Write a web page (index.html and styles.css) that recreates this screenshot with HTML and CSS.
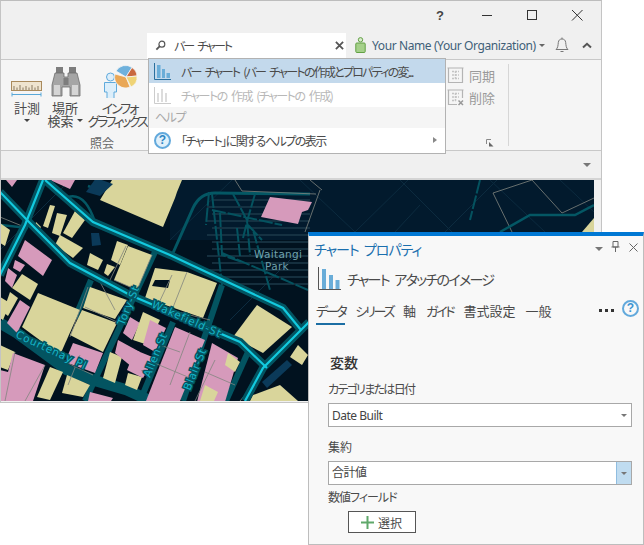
FILE: index.html
```html
<!DOCTYPE html>
<html lang="ja">
<head>
<meta charset="utf-8">
<title>チャート プロパティ</title>
<link rel="stylesheet" href="styles.css">
</head>
<body>
<div class="window">
  <div class="titlebar">
    <span class="help-mark">?</span>
    <svg class="win-icon" viewBox="0 0 12 12"><path class="win-line" d="M1 6.500H11"/></svg>
    <svg class="win-icon" viewBox="0 0 12 12"><rect class="win-line" x="1.500" y="1.500" width="9" height="9"/></svg>
    <svg class="win-icon" viewBox="0 0 12 12"><path class="win-line" d="M1 1L11.500 11.500M11.500 1L1 11.500"/></svg>
  </div>
  <div class="quickbar">
    <div class="search">
      <svg class="search-icon" viewBox="0 0 12 12"><circle class="lens" cx="7.500" cy="4.500" r="3.200"/><path class="lens-h" d="M5 7L1.500 10.500"/></svg>
      <span class="search-text">バー チャート</span>
      <svg class="search-x" viewBox="0 0 10 10"><path class="x-line" d="M1 1L9 9M9 1L1 9"/></svg>
    </div>
    <svg class="user-icon" viewBox="0 0 11 16"><circle class="user-line" cx="5.500" cy="2.800" r="2.200"/><rect class="user-body" x="0.800" y="6" width="9.400" height="9.500" rx="1"/></svg>
    <span class="user-name">Your Name (Your Organization)</span>
    <i class="caret caret-user"></i>
    <svg class="bell" viewBox="0 0 14 16"><path class="bell-line" d="M1 12.500C3 11 3 8 3.300 5.500C3.600 3 5 2 7 2C9 2 10.400 3 10.700 5.500C11 8 11 11 13 12.500ZM7 0.500V2M5.500 14.500H8.500"/></svg>
    <svg class="chev" viewBox="0 0 10 7"><path class="chev-line" d="M1 5.500L5 1.800L9 5.500"/></svg>
  </div>
  <div class="ribbon">
    <div class="group group-query">
      <div class="tools">
        <div class="tool tool-measure">
          <svg class="tool-icon" viewBox="0 0 38 38">
            <rect class="ruler" x="3.500" y="21.500" width="30" height="9"/>
            <path class="ruler-tick" d="M6 30V26M9 30V27.500M12 30V25M15 30V27.500M18 30V26M21 30V27.500M24 30V25M27 30V27.500M30 30V26"/>
            <path class="ruler-dim" d="M4 34.500H33M4 32.500V36.500M33 32.500V36.500"/>
          </svg>
          <span class="tool-label">計測</span>
          <i class="caret caret-center"></i>
        </div>
        <div class="tool tool-find">
          <svg class="tool-icon" viewBox="0 0 38 38">
            <path class="bino-dark" d="M10 7H17V14H10ZM23 7H30V14H23Z"/>
            <path class="bino-body" d="M9 13H18V17H22V13H31L34 25V36H24V27H16V36H6V25Z"/>
            <path class="bino-light" d="M8 25H14V35H8ZM26 25H32V35H26Z"/>
            <rect class="bino-dark" x="17.500" y="18" width="5" height="7"/>
          </svg>
          <span class="tool-label">場所</span>
          <span class="tool-label">検索<i class="caret caret-inline"></i></span>
        </div>
        <div class="tool tool-info">
          <svg class="tool-icon" viewBox="0 0 62 38">
            <circle class="person" cx="24.500" cy="17" r="4"/>
            <path class="person" d="M18.500 22.500H30.500V32H28V38.500H21V32H18.500Z"/>
            <path class="pie-orange" d="M40 17L29 14A11 11 0 0 0 44 27Z"/>
            <path class="pie-blue" d="M40 17L30 11A11 11 0 0 1 46 7.500Z"/>
            <path class="pie-red" d="M40 17L46 7.500A11 11 0 0 1 51 16Z"/>
            <path class="pie-yellow" d="M40 17L51 16A11 11 0 0 1 45 27Z"/>
          </svg>
          <span class="tool-label tool-kana tool-kana-short">インフォ</span>
          <span class="tool-label tool-kana">グラフィックス</span>
        </div>
      </div>
      <div class="group-name">照会</div>
    </div>
    <div class="group group-sync">
      <div class="sync-row">
        <svg class="sync-icon" viewBox="0 0 17 17"><path class="sync-line" d="M0.500 1H16.500M1.500 1V15.500H15.500V1"/><path class="sync-dash" d="M5 4.500H12M5 8H12M5 11.500H12M8.500 4V12"/></svg>
        <span class="sync-text">同期</span>
      </div>
      <div class="sync-row">
        <svg class="sync-icon" viewBox="0 0 17 17"><path class="sync-line" d="M0.500 1H16.500M1.500 1V15.500H10M15.500 1V9"/><path class="sync-dash" d="M5 4.500H12M5 8H12M5 11.500H9M8.500 4V12"/><path class="sync-x" d="M11.500 11.500L16 16M16 11.500L11.500 16"/></svg>
        <span class="sync-text">削除</span>
      </div>
      <svg class="launcher" viewBox="0 0 8 8"><path class="launch-line" d="M0.500 5V0.500H5"/><path class="launch-fill" d="M3 3L7.500 7.500H3Z"/></svg>
    </div>
    <div class="ribbon-sep"></div>
  </div>
  <div class="tabstrip"><i class="caret caret-strip"></i></div>
  <div class="map-frame">
    <svg class="map" viewBox="1 180 593 221">
      <rect class="m-bg" x="1" y="180" width="593" height="221"/>
      <rect class="m-park" x="170" y="180" width="424" height="60"/>
      <path class="m-faint" d="M300 180L355 232M355 232L408 180M400 180L460 240M445 232L497 180M395 232L420 205M490 180L545 232M560 180L594 212M0 250L70 180M170 240L232 180M230 320L300 250"/>
      <path class="m-park-line" d="M212 200H310M207 207H310M212 214H310M207 221H310M212 228H310M207 235H310M212 242H310M212 249H310M207 256H310M212 263H310M207 270H310M215 277H310M225 284H310"/>
      <path class="m-thin" d="M173 253L193 208Q200 193 215 193L310 194"/>
      <path class="m-dash" d="M209 192L206 225M212 194L222 285M233 194L247 220L250 255M255 194L248 218L243 238M212 210L282 225M220 213L222 255L242 262M237 228L240 256M253 230L270 290M222 253L308 290M248 225L262 240M480 180L470 220"/>
      <path class="m-outline" d="M235 180L242 191L316 194M493 193L532 180L562 213L594 198M493 193L512 232M305 232L320 190M310 180L322 190"/>

      <polyline class="r-wide" points="0,323 17,333 67,370 93,380 127,390 153,402"/>
      <polyline class="r-thin" points="155,252 85,401"/>
      <polyline class="r-thin" points="173,322 140,401"/>
      <polyline class="r-thin" points="222,285 183,401"/>
      <polyline class="r-thin" points="91,280 75,318"/>
      <polyline class="r-thin" points="248,352 226,401"/>
      <path class="r-small" d="M68 197Q85 192 95 222M88 186L98 190M0 225L28 228M500 232L530 215H575L594 205"/>

      <polygon class="b-y" points="100,200 112,180 182,180 177,192 175,198 163,227"/>
      <polygon class="b-y" points="50,205 55,206 48,228 43,226"/>
      <polygon class="b-y" points="57,213 67,215 60,236 52,233"/>
      <polygon class="b-y" points="75,211 85,220 72,238 63,233"/>
      <polygon class="b-y" points="60,235 83,248 73,258 55,245"/>
      <polygon class="b-y" points="36,222 41,227 39,230 35,226"/>
      <polygon class="b-y" points="117,241 128,245 120,265 111,260"/>
      <polygon class="b-y" points="128,246 152,255 137,290 114,280"/>
      <polygon class="b-y" points="90,253 103,260 98,270 87,265"/>
      <polygon class="b-y" points="107,264 115,267 108,276 104,273"/>
      <polygon class="b-y" points="0,223 10,230 5,246 0,243"/>
      <polygon class="b-y" points="22,274 38,284 30,300 12,288"/>
      <polygon class="b-y" points="0,297 10,303 3,320 0,318"/>
      <polygon class="b-y" points="10,292 18,298 8,316 3,312"/>
      <polygon class="b-p" points="25,240 52,260 43,276 18,256"/>
      <polygon class="b-p" points="15,260 25,265 20,272 13,268"/>
      <polygon class="b-p" points="8,268 17,275 12,288 5,281"/>
      <polygon class="b-p" points="20,300 30,307 17,333 7,323"/>
      <polygon class="b-p" points="6,180 17,180 12,187"/>
      <polygon class="b-p" points="50,180 75,180 70,189"/>
      <polygon class="b-y" points="38,293 80,310 60,355 22,327"/>
      <polygon class="b-y" points="82,310 117,323 103,352 70,335"/>
      <polygon class="b-y" points="90,287 127,300 115,319 83,308"/>
      <polygon class="b-y" points="155,268 187,272 217,283 203,318 145,298"/>
      <polygon class="m-dark" points="155,280 170,280 168,288 152,286"/>
      <polygon class="b-y" points="257,305 292,327 263,353 233,337"/>
      <polygon class="b-y" points="0,345 15,352 8,370 0,367"/>
      <polygon class="b-p" points="13,353 45,365 33,401 0,401 0,370 8,372"/>
      <polygon class="b-p" points="73,343 103,353 95,373 65,362"/>
      <polygon class="b-y" points="50,367 63,372 50,400 37,397"/>
      <polygon class="b-y" points="67,375 90,385 83,397 62,393"/>
      <polygon class="b-y" points="110,352 122,357 115,383 103,378"/>
      <polygon class="b-y" points="128,373 142,377 137,390 125,385"/>
      <polygon class="b-p" points="130,317 140,323 132,340 123,333"/>
      <polygon class="b-p" points="118,340 140,352 132,367 115,353"/>
      <polygon class="b-y" points="143,312 160,320 148,345 133,340"/>
      <polygon class="b-p" points="150,320 166,328 155,352 143,345"/>
      <polygon class="b-p" points="135,350 155,358 143,378 127,370"/>
      <polygon class="b-p" points="175,327 205,340 180,401 146,401"/>
      <polygon class="b-p" points="212,343 238,358 225,402 197,402"/>
      <polygon class="b-y" points="228,353 240,362 235,372 225,365"/>
      <polygon class="b-y" points="205,385 218,392 214,401 200,401"/>
      <polygon class="b-p" points="90,392 113,398 111,401 88,401"/>
      <polygon class="b-y" points="298,345 308,355 302,365 290,357"/>
      <polygon class="b-y" points="253,395 280,385 298,401 250,401"/>
      <polygon class="b-y" points="582,232 594,218 594,232"/>
      <polygon class="b-hatch" points="287,360 292,365 267,388 262,382"/>
      <polygon class="b-hatch" points="96,178 113,184 100,196 86,192"/>
      <polygon class="b-hatch" points="91,233 99,233 101,245 92,246"/>
      <polygon class="b-p" points="270,197 312,202 308,210 302,212 298,224 261,217"/>
      <path class="m-outline" d="M172,275 158,305M187,272 172,310M150,305 210,320M190,332 170,385M152,362 195,380M160,345 180,352M88,287 70,337M85,307 117,322M15,352 5,401M45,365 25,401M65,362 93,375M80,355 68,385M215,360 195,401M205,372 235,385M100,282 115,310M126,246 110,280M152,255 137,290 114,280"/>
      <path class="m-outline" d="M0 217L27 228L42 180M24 225L0 278M267 368L240 401M309 322L262 372"/>

      <polyline class="road" points="45,180 93,222 170,255 283,308 301,330"/>
      <polyline class="road" points="0,192 30,223 70,263 130,295 240,342 267,368"/>
      <polyline class="road" points="43,180 25,225 0,275"/>
      <polyline class="road" points="309,322 263,368 245,401"/>
      <polyline class="road-glow" points="45,180 93,222 170,255 283,308 301,330"/>
      <polyline class="road-glow" points="0,192 30,223 70,263 130,295 240,342 267,368"/>
      <polyline class="road-glow" points="43,180 25,225 0,275"/>
      <polyline class="road-glow" points="309,322 263,368 245,401"/>

      <text class="m-label" x="254" y="258">Waitangi</text>
      <text class="m-label" x="265" y="270">Park</text>
      <text class="m-street" transform="translate(151 307) rotate(24)">Wakefield-St</text>
      <text class="m-street" transform="translate(15 337) rotate(25)">Courtenay Pl</text>
      <text class="m-street" transform="translate(124 326) rotate(-68)">Tory-St</text>
      <text class="m-street" transform="translate(150 378) rotate(-68)">Allen-St</text>
      <text class="m-street" transform="translate(190 391) rotate(-68)">Blair-St</text>
    </svg>
  </div>
</div>

<div class="menu">
  <div class="menu-item menu-active">
    <svg class="menu-icon" viewBox="0 0 17 17"><path class="axis-blue" d="M0.500 0V16.500H17"/><path class="bar-blue" d="M3 2H6.500V15H3ZM8 6H11V15H8ZM12.500 10H16V15H12.500Z"/></svg>
    <span class="menu-text menu-text-long">バー チャート (バー チャートの作成とプロパティの変...</span>
  </div>
  <div class="menu-item menu-disabled">
    <svg class="menu-icon" viewBox="0 0 17 17"><path class="axis-grey" d="M0.500 0V16.500H17"/><path class="bar-grey" d="M3 6H5V15H3ZM7 2H9V15H7ZM11 6H13V15H11Z"/></svg>
    <span class="menu-text">チャートの 作成 (チャートの 作成)</span>
  </div>
  <div class="menu-head">ヘルプ</div>
  <div class="menu-item menu-help">
    <span class="q-icon">?</span>
    <span class="menu-text">「チャート」に関するヘルプの表示</span>
    <i class="arrow-right"></i>
  </div>
</div>

<aside class="panel">
  <div class="panel-head">
    <span class="panel-title">チャート プロパティ</span>
    <i class="caret caret-panel"></i>
    <svg class="pin" viewBox="0 0 9 11"><path class="pin-line" d="M2 0.500H7V6H2ZM0.500 6H8.500M4.500 6V11"/></svg>
    <svg class="panel-x" viewBox="0 0 9 9"><path class="panel-x-line" d="M0.500 0.500L8.500 8.500M8.500 0.500L0.500 8.500"/></svg>
  </div>
  <div class="panel-sub">
    <svg class="sub-icon" viewBox="0 0 23 23"><path class="axis-dark" d="M0.500 0V22.500H23"/><path class="bar-sub" d="M4 2H8V22H4ZM11 8H15V22H11ZM17.500 13H21.500V22H17.500Z"/></svg>
    <span class="sub-text">チャート アタッチのイメージ</span>
  </div>
  <div class="tabs">
    <span class="tab tab-kana tab-active">データ</span>
    <span class="tab tab-kana">シリーズ</span>
    <span class="tab">軸</span>
    <span class="tab tab-kana">ガイド</span>
    <span class="tab">書式設定</span>
    <span class="tab">一般</span>
    <span class="dots"><i></i><i></i><i></i></span>
    <span class="panel-help">?</span>
  </div>
  <div class="form">
    <h3 class="form-title">変数</h3>
    <div class="field-label field-first">カテゴリまたは日付</div>
    <div class="select">
      <span class="select-text">Date Built</span>
      <span class="select-btn"><i class="caret caret-small"></i></span>
    </div>
    <div class="field-label field-second">集約</div>
    <div class="select">
      <span class="select-text select-text-up">合計値</span>
      <span class="select-btn select-btn-hot"><i class="caret caret-small"></i></span>
    </div>
    <div class="field-label field-third">数値フィールド</div>
    <div class="pick">
      <svg class="plus" viewBox="0 0 13 13"><path class="plus-line" d="M6.500 0V13M0 6.500H13"/></svg>
      <span>選択</span>
    </div>
  </div>
</aside>
</body>
</html>
```

FILE: styles.css
```css
* { box-sizing: border-box; }
html, body { margin: 0; padding: 0; }
body {
  position: relative;
  width: 644px;
  height: 545px;
  overflow: hidden;
  background: #fff;
  color: #4a4a4a;
  font-family: "Noto Sans CJK JP", "Noto Sans", sans-serif;
  font-feature-settings: "palt";
  font-size: 12px;
}
i { display: block; font-style: normal; }

.window {
  width: 602px;
  height: 403px;
  background: #f0f0f0;
  border: 1px solid #c4c4c4;
  border-top-color: #bdbdbd;
  display: flex;
  flex-direction: column;
}
.titlebar {
  height: 32px;
  flex: none;
  display: flex;
  align-items: center;
  padding: 0 0 4px 434px;
}
.help-mark { width: 10px; flex: none; font: bold 13px "Liberation Sans", sans-serif; color: #444; margin-right: 36px; text-align: center; }
.win-icon { width: 12px; height: 12px; flex: none; margin-right: 33px; }
.win-line { fill: none; stroke: #333; stroke-width: 1; }

.quickbar { height: 26px; flex: none; display: flex; align-items: center; }
.search {
  width: 199px;
  height: 26px;
  flex: none;
  margin-left: 146px;
  background: #fff;
  display: flex;
  align-items: center;
  padding: 0 2px 2px 8px;
}
.search-icon { width: 11px; height: 11px; flex: none; }
.lens { fill: none; stroke: #555; stroke-width: 1.3; }
.lens-h { fill: none; stroke: #555; stroke-width: 2; }
.search-text { margin-left: 8px; font-size: 12px; letter-spacing: -1.900px; word-spacing: 3px; color: #4a4a4a; flex: 1; }
.search-x { width: 9px; height: 9px; flex: none; }
.x-line { stroke: #555; stroke-width: 2; }
.user-icon { width: 11px; height: 16px; flex: none; margin-left: 9px; margin-bottom: 2px; }
.user-line { fill: #d7eacb; stroke: #62a044; stroke-width: 1; }
.user-body { fill: #a5d08a; stroke: #62a044; stroke-width: 1; }
.user-name { margin-left: 6px; margin-bottom: 2px; flex: none; font: 12px "Noto Sans", sans-serif; letter-spacing: -0.4px; color: #3f5f78; white-space: nowrap; }
.caret { width: 0; height: 0; flex: none; border-left: 3px solid transparent; border-right: 3px solid transparent; border-top: 3px solid #666; }
.caret-user { margin-left: 3px; margin-bottom: 2px; }
.bell { width: 14px; height: 16px; flex: none; margin-left: 10px; margin-bottom: 2px; }
.bell-line { fill: none; stroke: #777; stroke-width: 1; }
.chev { width: 10px; height: 7px; flex: none; margin-left: 13px; margin-bottom: 2px; }
.chev-line { fill: none; stroke: #555; stroke-width: 2; }

.ribbon {
  height: 92px;
  flex: none;
  background: #f5f5f5;
  border-top: 1px solid #c8c8c8;
  border-bottom: 1px solid #c8c8c8;
  display: flex;
}
.group { position: relative; }
.group-query { width: 146px; flex: none; }
.tools { display: flex; height: 76px; }
.tool { display: flex; flex-direction: column; align-items: center; flex: none; }
.tool-measure { width: 38px; margin-left: 7px; }
.tool-find { width: 38px; }
.tool-info { width: 62px; margin-left: 2px; }
.tool-icon { width: 38px; height: 38px; flex: none; }
.tool-info .tool-icon { width: 62px; }
.tool-label { font-size: 13px; line-height: 13px; color: #4a4a4a; white-space: nowrap; display: flex; align-items: center; }
.tool-kana { letter-spacing: -2.600px; }
.tool-kana-short { letter-spacing: -2px; margin-left: 5px; }
.tool-measure .tool-label, .tool-find .tool-label:first-of-type, .tool-info .tool-label:first-of-type { margin-top: 3px; }
.caret-center { margin-top: 5px; border-top-color: #444; }
.caret-inline { margin-left: 3px; border-top-color: #444; }
.group-name { text-align: center; padding-left: 56px; font-size: 12px; line-height: 14px; color: #666; }
.group-sync { width: 361px; flex: none; padding: 4px 0 0 300px; position: relative; }
.sync-row { display: flex; align-items: center; gap: 5px; height: 22px; }
.sync-icon { width: 17px; height: 17px; flex: none; }
.sync-line { fill: none; stroke: #b4b4b4; stroke-width: 1.200; }
.sync-dash { fill: none; stroke: #c4c4c4; stroke-width: 1.500; stroke-dasharray: 2 1; }
.sync-x { fill: none; stroke: #999; stroke-width: 1.500; }
.sync-text { font-size: 13px; color: #9a9a9a; }
.launcher { position: absolute; left: 339px; top: 79px; width: 8px; height: 8px; }
.launch-line { fill: none; stroke: #888; }
.launch-fill { fill: #666; }
.ribbon-sep { width: 1px; height: 82px; margin-top: 4px; background: #d6d6d6; }

.ruler { fill: #efe4cf; stroke: #a98a5c; stroke-width: 1; }
.ruler-tick { fill: none; stroke: #8a7a60; stroke-width: 1; }
.ruler-dim { fill: none; stroke: #59a8d8; stroke-width: 1; }
.bino-dark { fill: #7d7d7d; }
.bino-body { fill: #a5a5a5; stroke: #6c6c6c; stroke-width: 0.800; }
.bino-light { fill: #d5d5d5; }
.person { fill: #dceefa; stroke: #5faadc; stroke-width: 1; }
.pie-orange { fill: #e9a756; stroke: #f5f5f5; stroke-width: 0.800; }
.pie-blue { fill: #6fb1dc; stroke: #f5f5f5; stroke-width: 0.800; }
.pie-red { fill: #c9683f; stroke: #f5f5f5; stroke-width: 0.800; }
.pie-yellow { fill: #efd376; stroke: #f5f5f5; stroke-width: 0.800; }

.tabstrip { height: 27px; flex: none; display: flex; justify-content: flex-end; align-items: center; padding-right: 10px; }
.caret-strip { border-left-width: 4px; border-right-width: 4px; border-top: 4px solid #777; }
.map-frame { height: 223px; flex: none; border-top: 2px solid #d4d4d4; }
.map { display: block; width: 593px; height: 221px; }

.m-bg { fill: #01121f; }
.m-park { fill: #021a2d; }
.m-faint { fill: none; stroke: #0c2b3f; stroke-width: 1; }
.m-park-line { fill: none; stroke: #1d3a4a; stroke-width: 1.500; }
.m-thin { fill: none; stroke: #045764; stroke-width: 3; }
.m-dash { fill: none; stroke: #04525f; stroke-width: 2; stroke-dasharray: 14 2; }
.m-outline { fill: none; stroke: #82857f; stroke-width: 0.800; }
.m-dark { fill: #01121f; }
.r-wide { fill: none; stroke: #035461; stroke-width: 11; }
.r-thin { fill: none; stroke: #035461; stroke-width: 6; }
.r-small { fill: none; stroke: #045764; stroke-width: 2.500; }
.road { fill: none; stroke: #035461; stroke-width: 8; }
.road-glow { fill: none; stroke: #12cadf; stroke-width: 2.200; }
.b-y { fill: #d9d59b; }
.b-p { fill: #d69abb; }
.b-hatch { fill: #0b3a59; }
.m-label { font: 10.500px "DejaVu Sans", sans-serif; letter-spacing: 0.300px; fill: #6fa0ad; }
.m-street { font: 10.500px "DejaVu Sans", sans-serif; letter-spacing: 0.800px; fill: #16b6c9; stroke: #035461; stroke-width: 3px; paint-order: stroke; }

.menu {
  position: absolute;
  left: 148px;
  top: 58px;
  width: 298px;
  height: 96px;
  background: #fff;
  border: 1px solid #b2b2b2;
  display: flex;
  flex-direction: column;
}
.menu-item { display: flex; align-items: center; height: 24px; padding-left: 5px; position: relative; }
.menu-active { background: #c3d9ec; }
.menu-disabled .menu-text { color: #b8b8b8; }
.menu-head { height: 21px; line-height: 20px; padding-left: 6px; background: #f5f5f5; color: #a8a8a8; font-size: 12px; letter-spacing: -1.500px; }
.menu-help { height: 25px; }
.menu-icon { width: 17px; height: 17px; flex: none; }
.menu-text { margin-left: 10px; font-size: 12px; letter-spacing: -1.500px; word-spacing: 3px; white-space: nowrap; }
.menu-text-long { letter-spacing: -1.750px; }
.axis-blue { fill: none; stroke: #2a6f9e; }
.bar-blue { fill: #6aadd8; }
.axis-grey { fill: none; stroke: #ccc; }
.bar-grey { fill: #dcdcdc; }
.q-icon {
  width: 17px;
  height: 17px;
  flex: none;
  border: 2px solid #62a9dc;
  border-radius: 50%;
  background: #e0f0fa;
  color: #2f86c5;
  font: bold 12px/13px "Liberation Sans", sans-serif;
  text-align: center;
}
.arrow-right { position: absolute; left: 284px; top: 9px; width: 0; height: 0; border-top: 3px solid transparent; border-bottom: 3px solid transparent; border-left: 4px solid #888; }

.panel {
  position: absolute;
  left: 308px;
  top: 232px;
  width: 336px;
  height: 313px;
  background: #f8f8f8;
  border: 1px solid #bdbdbd;
  border-top: 4px solid #0078d4;
  display: flex;
  flex-direction: column;
}
.panel-head { height: 25px; flex: none; display: flex; align-items: center; padding-left: 5px; }
.panel-title { flex: 1; font-size: 14px; letter-spacing: -1px; word-spacing: 3px; color: #1b6fae; white-space: nowrap; }
.caret-panel { border-left-width: 4px; border-right-width: 4px; border-top: 4px solid #777; margin-right: 8px; }
.pin { width: 9px; height: 11px; flex: none; margin-right: 9px; margin-bottom: 5px; }
.pin-line { fill: none; stroke: #666; }
.panel-x { width: 9px; height: 9px; flex: none; margin-right: 5px; margin-bottom: 3px; }
.panel-x-line { stroke: #666; }
.panel-sub { height: 35px; flex: none; display: flex; align-items: center; padding: 0 0 0 9px; }
.sub-icon { width: 23px; height: 23px; flex: none; }
.axis-dark { fill: none; stroke: #555; }
.bar-sub { fill: #6aadd8; }
.sub-text { margin-left: 6px; font-size: 14px; letter-spacing: -1.700px; word-spacing: 4px; color: #4a4a4a; white-space: nowrap; }
.tabs { height: 28px; flex: none; display: flex; align-items: flex-start; padding: 6px 0 0 7px; gap: 10px; position: relative; }
.tab { font-size: 13px; line-height: 18px; height: 23px; color: #4a4a4a; white-space: nowrap; }
.tab-kana { letter-spacing: -2.300px; }
.tab-active { border-bottom: 2px solid #1c6ea4; }
.dots { position: absolute; left: 290px; top: 13px; display: flex; gap: 3px; }
.dots i { width: 3px; height: 3px; background: #333; }
.panel-help {
  position: absolute;
  left: 313px;
  top: 4px;
  width: 17px;
  height: 17px;
  border: 2px solid #62a9dc;
  border-radius: 50%;
  color: #3b93d2;
  font: bold 12px/13px "Liberation Sans", sans-serif;
  text-align: center;
}
.form { padding: 28px 11px 0 19px; flex: 1; }
.form-title { margin: 0 0 0 2px; font-size: 14px; line-height: 20px; font-weight: 500; color: #333; }
.field-label { font-size: 12px; line-height: 18px; color: #4a4a4a; }
.field-first { margin-top: 8px; letter-spacing: -1.700px; }
.field-second { margin-top: 11px; }
.field-third { margin-top: 3px; letter-spacing: -1px; }
.select {
  height: 24px;
  margin-top: 5px;
  background: #fff;
  border: 1px solid #a8a8a8;
  display: flex;
  align-items: center;
  padding-left: 3px;
}
.select-text { flex: 1; font: 12px "Noto Sans", "Noto Sans CJK JP", sans-serif; letter-spacing: -0.500px; color: #444; }
.select-text-up { padding-bottom: 2px; }
.select-btn { width: 15px; height: 22px; display: flex; align-items: center; justify-content: center; }
.select-btn-hot { background: #c0dcf0; border-left: 1px solid #8fbde0; }
.caret-small { border-left-width: 3px; border-right-width: 3px; border-top: 3px solid #777; }
.pick {
  width: 68px;
  height: 22px;
  margin: 5px 0 0 20px;
  background: #fff;
  border: 1px solid #555;
  display: flex;
  align-items: center;
  gap: 4px;
  padding-left: 12px;
  font-size: 12px;
  color: #4a4a4a;
}
.plus { width: 13px; height: 13px; flex: none; }
.plus-line { stroke: #5fa86a; stroke-width: 2; }
```
